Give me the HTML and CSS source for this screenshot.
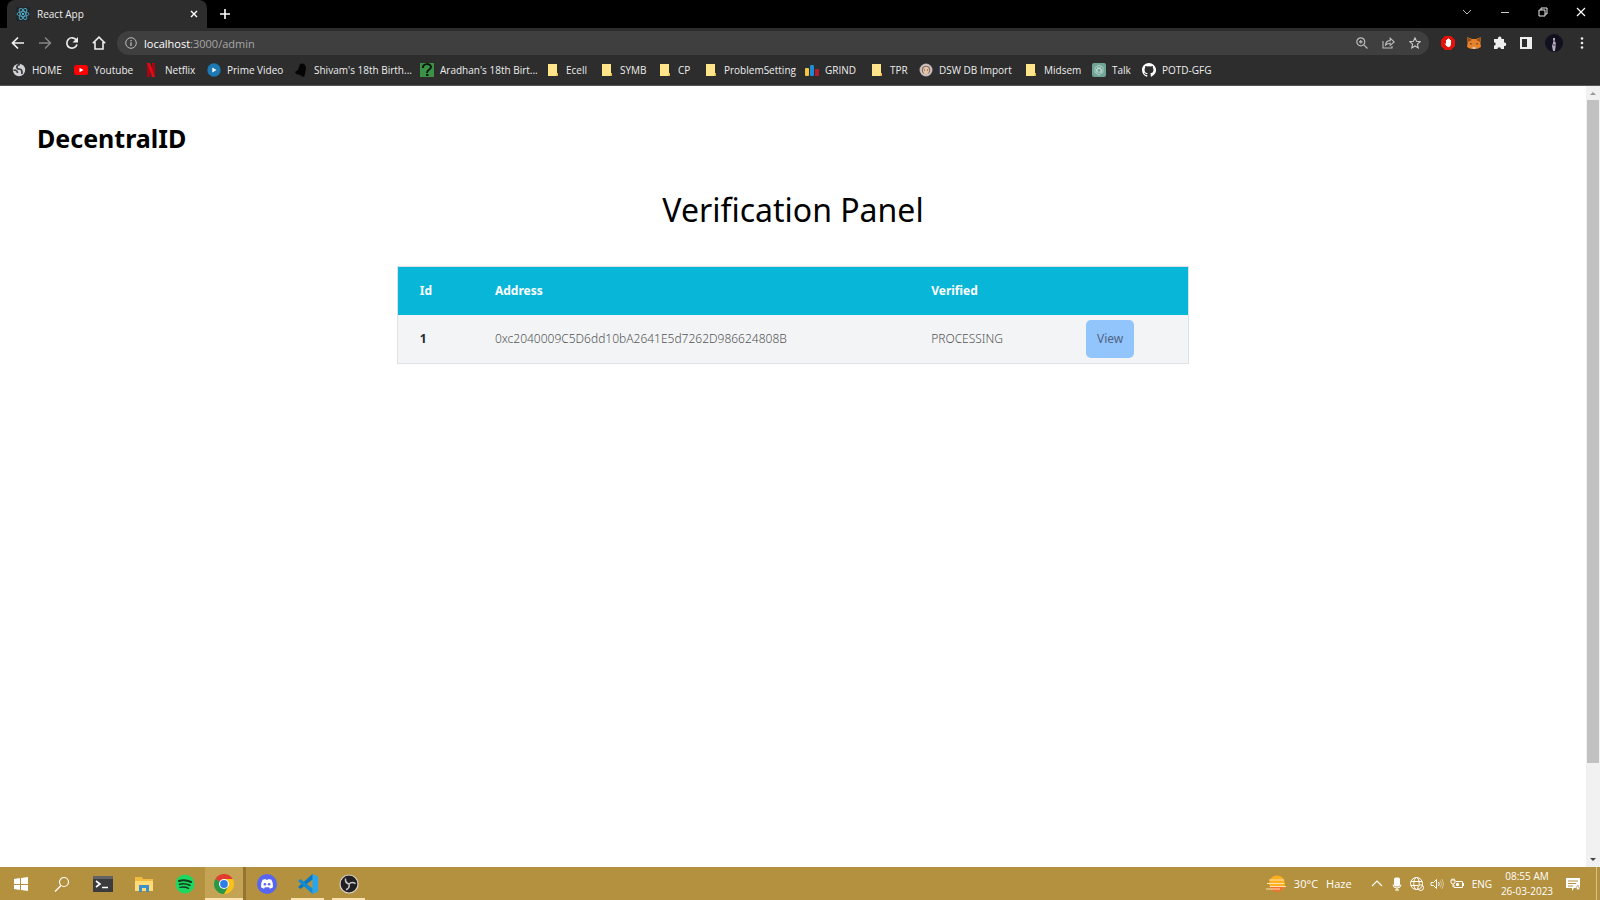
FILE: index.html
```html
<!DOCTYPE html>
<html lang="en">
<head>
<meta charset="utf-8">
<title>React App</title>
<link rel="stylesheet" href="styles.css">
</head>
<body>
<svg class="defs" width="0" height="0" aria-hidden="true">
  <symbol id="folder" viewBox="0 0 14 14"><path d="M2 1h9v10h1v2H2z" fill="#ffe48a"/><path d="M11 10h1v3h-2z" fill="#e9b949"/></symbol>
</svg>
<header class="browser">
  <div class="tabstrip">
    <div class="tab">
      <svg class="i14" viewBox="0 0 14 14" fill="none" stroke="#4f9fb5"><rect width="14" height="14" rx="2" fill="#20262b" stroke="none"/><ellipse cx="7" cy="7" rx="6" ry="2.4"/><ellipse cx="7" cy="7" rx="6" ry="2.4" transform="rotate(60 7 7)"/><ellipse cx="7" cy="7" rx="6" ry="2.4" transform="rotate(120 7 7)"/><circle cx="7" cy="7" r="1" fill="#61dafb" stroke="none"/></svg>
      <span class="tab-title">React App</span>
      <button class="icon-btn" aria-label="Close tab"><svg width="8" height="8" viewBox="0 0 8 8" stroke="#fff" stroke-width="1.4"><path d="M1 1l6 6M7 1L1 7"/></svg></button>
    </div>
    <button class="icon-btn new-tab" aria-label="New tab"><svg width="10" height="10" viewBox="0 0 10 10" stroke="#fff" stroke-width="1.6"><path d="M5 0v10M0 5h10"/></svg></button>
    <div class="window-controls">
      <button class="icon-btn" aria-label="Search tabs"><svg width="10" height="10" viewBox="0 0 10 10" fill="none" stroke="#bbb"><path d="M1 3l4 4 4-4"/></svg></button>
      <button class="icon-btn" aria-label="Minimize"><svg width="10" height="10" viewBox="0 0 10 10" stroke="#ccc"><path d="M1 5.500h8"/></svg></button>
      <button class="icon-btn" aria-label="Restore"><svg width="10" height="10" viewBox="0 0 10 10" fill="none" stroke="#eee"><path d="M1 3h6v6H1zM3 3V1h6v6H7"/></svg></button>
      <button class="icon-btn" aria-label="Close"><svg width="10" height="10" viewBox="0 0 10 10" stroke="#fff" stroke-width="1.200"><path d="M1 1l8 8M9 1L1 9"/></svg></button>
    </div>
  </div>
  <div class="toolbar">
    <nav class="nav-buttons" aria-label="Navigation">
      <button class="icon-btn" aria-label="Back"><svg class="i14" viewBox="0 0 14 14" fill="none" stroke="#f1f1f1" stroke-width="1.700"><path d="M13 7H2M7 1.500L1.500 7 7 12.500"/></svg></button>
      <button class="icon-btn" aria-label="Forward"><svg class="i14" viewBox="0 0 14 14" fill="none" stroke="#858585" stroke-width="1.500"><path d="M1 7h11M7 1.500L12.500 7 7 12.500"/></svg></button>
      <button class="icon-btn" aria-label="Reload"><svg class="i14" viewBox="0 0 14 14"><path d="M11.300 4A5.200 5.200 0 1 0 12 8.500" fill="none" stroke="#eee" stroke-width="1.700"/><path d="M13 1v5.500H7.500z" fill="#eee"/></svg></button>
      <button class="icon-btn" aria-label="Home"><svg class="i14" viewBox="0 0 14 14" fill="none" stroke="#eee" stroke-width="1.600"><path d="M.8 7.200L7 1.200l6.200 6M3 6v7h8V6"/></svg></button>
    </nav>
    <div class="omnibox">
      <svg width="12" height="12" viewBox="0 0 12 12" fill="none" stroke="#bbb"><circle cx="6" cy="6" r="5.300"/><path d="M6 5.200V9M6 3v1.200" stroke-width="1.300"/></svg>
      <a class="url" href="#"><span class="host">localhost</span>:3000/admin</a>
      <div class="omni-actions">
        <button class="icon-btn" aria-label="Zoom"><svg width="12" height="12" viewBox="0 0 12 12" fill="none" stroke="#bbb" stroke-width="1.200"><circle cx="4.800" cy="4.800" r="4"/><path d="M7.800 7.800l3.700 3.700M3 4.800h3.600M4.800 3v3.600"/></svg></button>
        <button class="icon-btn" aria-label="Share"><svg width="13" height="12" viewBox="0 0 13 12" fill="none" stroke="#bbb" stroke-width="1.100"><path d="M1 4v7h9V9M3.500 8c.3-3 2-4.300 4.700-4.400V1.200L12.200 5 8.200 8.300V6.200C6 6.200 4.800 6.700 3.500 8z"/></svg></button>
        <button class="icon-btn" aria-label="Bookmark"><svg width="12" height="12" viewBox="0 0 12 12" fill="none" stroke="#ccc" stroke-width="1.100"><path d="M6 .9l1.500 3.400 3.700.4-2.800 2.500.8 3.700L6 9l-3.200 1.900.8-3.700L.8 4.700l3.700-.4z"/></svg></button>
      </div>
    </div>
    <div class="extensions">
      <button class="icon-btn" aria-label="Ad blocker"><svg class="i14" viewBox="0 0 14 14"><path d="M4 0h6l4 4v6l-4 4H4l-4-4V4z" fill="#e3120b"/><path d="M3.500 7l1.500 1V4h1V3h1v-.5h1V3h1v1h1v4.500Q9.500 11 7.500 11.200 5.500 11 3.500 7z" fill="#fff"/></svg></button>
      <button class="icon-btn" aria-label="Wallet"><svg class="i14" viewBox="0 0 14 14"><path d="M0 1l5 2h4l5-2-.6 6 .6 4-3 1.500L9 13H5l-2-.5L0 11l.6-4z" fill="#e8822b"/><path d="M0 1l5 3-4 2zM14 1L9 4l4 2z" fill="#9a4d16"/><path d="M3 7l2.500 1-2 .6zM11 7L8.500 8l2 .6z" fill="#33312e"/><path d="M5.500 11h3L8 13H6z" fill="#d8cdc4"/></svg></button>
      <button class="icon-btn" aria-label="Extensions"><svg class="i14" viewBox="0 0 14 14"><path d="M1 3h4a1.800 1.800 0 1 1 3.400 0H11v3.500a1.800 1.800 0 1 1 0 3.500v3H8a1.800 1.800 0 0 0-3.600 0H1v-3.400a1.700 1.700 0 0 0 0-3.400z" fill="#eee"/></svg></button>
      <button class="icon-btn" aria-label="Side panel"><svg class="i14" viewBox="0 0 14 14"><path d="M1 1h12v12H1zM3 3v8h5V3z" fill="#eee" fill-rule="evenodd"/></svg></button>
      <button class="icon-btn" aria-label="Profile"><svg width="18" height="18" viewBox="0 0 18 18"><circle cx="9" cy="9" r="9" fill="#11101f"/><path d="M8 4h2v3l1 3-1 7H8L7 12l1-3z" fill="#b7a9bd"/><path d="M8 7h2M8 11h3" stroke="#503e55"/></svg></button>
      <button class="icon-btn" aria-label="Menu"><svg class="i14" viewBox="0 0 14 14" fill="#eee"><circle cx="7" cy="2.500" r="1.300"/><circle cx="7" cy="7" r="1.300"/><circle cx="7" cy="11.500" r="1.300"/></svg></button>
    </div>
  </div>
  <nav class="bookmarks" aria-label="Bookmarks">
    <a href="#"><svg class="i14" viewBox="0 0 14 14"><circle cx="7" cy="7" r="6.200" fill="#cfd1d4"/><path d="M8 1.500C4 2 4 6 7 6s3 2 3 5M1.500 7c2.500 0 4 .5 4 3" fill="none" stroke="#3a3b3e" stroke-width="1.700"/></svg>HOME</a>
    <a href="#"><svg class="i14" viewBox="0 0 14 14"><rect y="2" width="14" height="10" rx="2.500" fill="#f00"/><path d="M5.500 4.800L9.500 7l-4 2.200z" fill="#fff"/></svg>Youtube</a>
    <a href="#"><svg class="i14" viewBox="0 0 14 14"><path d="M2 0h3v14H2zM7 0h3v14H7z" fill="#a30812"/><path d="M2 0h3l5 14H7z" fill="#e50914"/></svg>Netflix</a>
    <a href="#"><svg class="i14" viewBox="0 0 14 14"><circle cx="7" cy="7" r="6.700" fill="#1d79b4"/><path d="M5.300 4.500L9.500 7l-4.200 2.500z" fill="#fff"/></svg>Prime Video</a>
    <a href="#"><svg class="i14" viewBox="0 0 14 14"><path d="M6 1Q11-1 12 5l-1 6-1 3-3-1-1-1-4-1-1-2 3-2z" fill="#050505"/></svg>Shivam's 18th Birth...</a>
    <a href="#"><svg class="i14" viewBox="0 0 14 14"><path d="M0 0h14v14H0z" fill="#3b9145"/><path d="M3 5c-1-5 8-5 8-1 0 3-4 2-4 6M6 12h2.500" fill="none" stroke="#0b180c" stroke-width="2"/></svg>Aradhan's 18th Birt...</a>
    <a href="#"><svg class="i14"><use href="#folder"/></svg>Ecell</a>
    <a href="#"><svg class="i14"><use href="#folder"/></svg>SYMB</a>
    <a href="#"><svg class="i14"><use href="#folder"/></svg>CP</a>
    <a href="#"><svg class="i14"><use href="#folder"/></svg>ProblemSetting</a>
    <a href="#"><svg class="i14" viewBox="0 0 14 14"><rect y="5" width="4" height="8" rx="1" fill="#f4c542"/><rect x="5" y="2" width="4" height="11" rx="1" fill="#1f8dd6"/><rect x="10" y="6" width="4" height="7" rx="1" fill="#b71c2c"/></svg>GRIND</a>
    <a href="#"><svg class="i14"><use href="#folder"/></svg>TPR</a>
    <a href="#"><svg class="i14" viewBox="0 0 14 14"><circle cx="7" cy="7" r="6.500" fill="#b9aeb2"/><circle cx="7" cy="7" r="5" fill="#8c6f60" stroke="#e5dfe0"/><ellipse cx="7" cy="7.500" rx="3" ry="3.700" fill="#e7c3a6"/><path d="M5 7h1M8 7h1" stroke="#554"/></svg>DSW DB Import</a>
    <a href="#"><svg class="i14"><use href="#folder"/></svg>Midsem</a>
    <a href="#"><svg class="i14" viewBox="0 0 14 14" fill="none" stroke="#d8ebe5"><rect width="14" height="14" rx="2" fill="#6fa596" stroke="none"/><path d="M7 2l4 2.300v5L7 12 3 9.500v-5zM5 4l4 2v4M9 4L5 6.500V10M7 5l2.500 1.500v2L7 9.500 4.500 8V6z" stroke-width=".6"/></svg>Talk</a>
    <a href="#"><svg class="i14" viewBox="0 0 16 16"><path fill="#fff" d="M8 0C3.580 0 0 3.580 0 8c0 3.540 2.290 6.530 5.470 7.590.4.070.55-.17.55-.38v-1.490c-2.010.37-2.530-.49-2.690-.94-.09-.23-.48-.94-.82-1.130-.28-.15-.68-.52-.01-.53.63-.01 1.080.58 1.230.82.72 1.210 1.870.87 2.330.66.07-.52.28-.87.51-1.070-1.780-.2-3.640-.89-3.640-3.950 0-.87.310-1.590.82-2.150-.08-.2-.36-1.020.08-2.120 0 0 .67-.21 2.200.82a7.500 7.500 0 0 1 4 0c1.530-1.040 2.200-.82 2.200-.82.44 1.100.16 1.920.08 2.120.51.56.82 1.270.82 2.150 0 3.070-1.870 3.750-3.650 3.950.29.25.54.73.54 1.480v2.200c0 .21.15.46.55.38A8 8 0 0 0 8 0z"/></svg>POTD-GFG</a>
  </nav>
</header>
<div class="viewport">
  <main class="page">
    <div class="brand">DecentralID</div>
    <h1>Verification Panel</h1>
    <table class="panel">
      <colgroup><col class="c-id"><col class="c-address"><col class="c-status"><col></colgroup>
      <thead><tr><th scope="col">Id</th><th scope="col">Address</th><th scope="col">Verified</th><td></td></tr></thead>
      <tbody><tr><th scope="row">1</th><td>0xc2040009C5D6dd10bA2641E5d7262D986624808B</td><td>PROCESSING</td><td><button class="view">View</button></td></tr></tbody>
    </table>
  </main>
  <div class="scrollbar" aria-hidden="true">
    <svg width="14" height="14" viewBox="0 0 14 14"><path d="M4 9l3-3 3 3z" fill="#999"/></svg>
    <div class="track"><div class="thumb"></div></div>
    <svg width="14" height="14" viewBox="0 0 14 14"><path d="M4 5l3 3 3-3z" fill="#444"/></svg>
  </div>
</div>
<footer class="taskbar">
  <button class="app" aria-label="Start"><svg class="i16" viewBox="0 0 16 16" fill="#fff"><path d="M1 3l6-1v6H1zM8 2l7-1v7H8zM1 9h6v5l-6-1zM8 9h7v6l-7-1z"/></svg></button>
  <button class="app" aria-label="Search"><svg class="i16" viewBox="0 0 16 16" fill="none" stroke="#fff" stroke-width="1.200"><circle cx="10" cy="6" r="4.500"/><path d="M7 9.500L1 15.500"/></svg></button>
  <button class="app" aria-label="Terminal"><svg class="i20" viewBox="0 0 20 20"><path d="M0 2h20v16H0z" fill="#3b3b3d"/><path d="M0 2h20v3H0z" fill="#626266"/><path d="M3 7l4 3-4 3M9 13.500h6" fill="none" stroke="#fff" stroke-width="1.600"/></svg></button>
  <button class="app" aria-label="File Explorer"><svg class="i20" viewBox="0 0 20 20"><path d="M1 3h7l1 2h10v12H1z" fill="#f1bb3f"/><path d="M1 7h18v10H1z" fill="#ffdc78"/><path d="M5 18v-7h10v7h-3v-4H8v4z" fill="#3c92ce"/></svg></button>
  <button class="app" aria-label="Spotify"><svg class="i20" viewBox="0 0 20 20" fill="none" stroke="#12391d" stroke-linecap="round"><circle cx="10" cy="10" r="9.500" fill="#1ed760" stroke="none"/><path d="M4 7q6-2 12 1" stroke-width="2"/><path d="M4.500 10.300q5-1.500 10.300 1" stroke-width="1.700"/><path d="M5 13.400q4.500-1 8.500 1" stroke-width="1.400"/></svg></button>
  <button class="app open active" aria-label="Chrome"><svg class="i20" viewBox="0 0 20 20"><path d="M10 10L1.340 5A10 10 0 0 1 18.660 5z" fill="#e33b2e"/><path d="M10 10V5h8.660A10 10 0 0 1 10 20z" fill="#fbc116"/><path d="M10 10l4.330 2.500L10 20A10 10 0 0 1 1.340 5z" fill="#279847"/><circle cx="10" cy="10" r="5" fill="#fff"/><circle cx="10" cy="10" r="3.900" fill="#2f7de9"/></svg></button>
  <button class="app" aria-label="Discord"><svg class="i20" viewBox="0 0 20 20"><circle cx="10" cy="10" r="10" fill="#5865f2"/><path d="M5.500 5.800L8.500 5l.5.800h2l.5-.8 3 .8Q16.500 9.500 16 13.300L13 14.800l-1-1.500H8l-1 1.500-3-1.500Q3.500 9.500 5.500 5.800z" fill="#fff"/><circle cx="7.900" cy="10.200" r="1.300" fill="#5865f2"/><circle cx="12.100" cy="10.200" r="1.300" fill="#5865f2"/></svg></button>
  <button class="app open" aria-label="Visual Studio Code"><svg class="i20" viewBox="0 0 20 20"><path d="M14.500 0L20 2.500v15L14.500 20z" fill="#27a5ee"/><path d="M14.500 0v5.500L2.500 15 0 13z" fill="#0879c5"/><path d="M14.500 20v-5.500L2.500 5 0 7z" fill="#138bd3"/></svg></button>
  <button class="app open" aria-label="OBS Studio"><svg class="i20" viewBox="0 0 20 20"><circle cx="10" cy="10" r="9" fill="#211f21" stroke="#d8d4d0" stroke-width="1.200"/><g fill="none" stroke="#c9c7c7" stroke-width="1.500"><path d="M10 10q-4-1-3.500-5.500"/><path d="M10 10q-4-1-3.500-5.500" transform="rotate(120 10 10)"/><path d="M10 10q-4-1-3.500-5.500" transform="rotate(240 10 10)"/></g></svg></button>
  <div class="tray">
    <div class="weather"><svg class="i20" viewBox="0 0 20 20"><circle cx="11" cy="9.500" r="8" fill="#fdb01e"/><path d="M4 13h14q-3 5-7 5t-7-5z" fill="#ef7134"/><path d="M3 6h15M1 9.500h17M4 12.500h16M0 15h14" stroke="#ffe0ae" stroke-width="1.200"/></svg><span>30°C</span><span>Haze</span></div>
    <div class="status">
      <svg width="14" height="14" viewBox="0 0 14 14" fill="none" stroke="#fff" stroke-width="1.200"><path d="M2 9l5-5 5 5"/></svg>
      <svg width="14" height="14" viewBox="0 0 14 14" fill="none" stroke="#fff"><rect x="4.500" y="1" width="5" height="8" rx="1" fill="#fff"/><path d="M3 7.500q0 3.500 4 3.500t4-3.500M7 11v2.500M5 13h4"/></svg>
      <svg width="14" height="14" viewBox="0 0 14 14" fill="none" stroke="#fff"><circle cx="6.500" cy="6.500" r="6"/><ellipse cx="6.500" cy="6.500" rx="2.700" ry="6"/><path d="M1 4.500h11M1 8.500h7"/><circle cx="10.700" cy="10.700" r="2.800" fill="#b3913e"/><path d="M9 12.500L12.500 9"/></svg>
      <svg width="14" height="14" viewBox="0 0 14 14" fill="none" stroke="#fff"><path d="M1 5.500h2.500l3-3v9l-3-3H1zM8.500 5q1.500 2 0 4"/><path d="M10.300 3.500q2.500 3.500 0 7M12 2q3 5 0 10" stroke="#d6c59b"/></svg>
      <svg width="14" height="14" viewBox="0 0 14 14" fill="none" stroke="#fff"><path d="M6 4.500h6.500v6H4V8M13.500 6v3M1 3h4v2q0 2-2 2T1 5zM2 1.500V3M4 1.500V3M3 7v3"/><path d="M6.500 8.500v-2h2v2z" fill="#fff"/></svg>
      <span class="lang">ENG</span>
    </div>
    <div class="clock"><time>08:55 AM</time><time>26-03-2023</time></div>
    <button class="icon-btn" aria-label="Notifications"><svg class="i14" viewBox="0 0 14 14"><path d="M0 1h14v10H8l-2 3v-3H0z" fill="#fff"/><path d="M2 4h10M2 6.500h8M2 9h5" stroke="#b3913e"/><path d="M12 8q-3 2-1 5 3 0 3-2-2 0-2-3z" fill="#fff" stroke="#b3913e" stroke-width=".7"/></svg></button>
  </div>
</footer>
</body>
</html>
```
FILE: styles.css
```css
* { box-sizing: border-box; }
body {
  margin: 0;
  min-height: 100vh;
  display: flex;
  flex-direction: column;
  background: #fff;
  font-family: "Open Sans", "Noto Sans", sans-serif;
}
button { font: inherit; border: 0; padding: 0; background: none; color: inherit; }
a { color: inherit; text-decoration: none; }
svg { display: block; flex: none; }
.defs { position: absolute; }
.i14 { width: 14px; height: 14px; }
.i16 { width: 16px; height: 16px; }
.i20 { width: 20px; height: 20px; }
.icon-btn { display: grid; place-items: center; }

.browser { background: #2d2d2d; color: #eee; font-size: 10px; border-bottom: 1px solid #555; }
.tabstrip { display: flex; align-items: center; height: 28px; padding-left: 7px; background: #000; }
.tab { display: flex; align-items: center; gap: 7px; width: 200px; height: 28px; padding: 0 9px; border-radius: 8px 8px 0 0; background: #2d2d2d; }
.tab-title { flex: 1; }
.new-tab { margin-left: 13px; }
.window-controls { display: flex; gap: 28px; margin-left: auto; padding: 0 14px 4px 0; }

.toolbar { display: flex; align-items: center; height: 30px; padding: 0 11px; }
.nav-buttons { display: flex; gap: 13px; }
.omnibox { flex: 1; display: flex; align-items: center; gap: 7px; height: 24px; margin-left: 11px; padding: 0 8px; border-radius: 12px; background: #3f3f3f; }
.url { flex: 1; font-size: 11px; color: #a6a6a6; }
.host { color: #fff; }
.omni-actions { display: flex; gap: 14px; }
.extensions { display: flex; align-items: center; gap: 12px; margin-left: 12px; }

.bookmarks {
  display: grid;
  grid-template-columns: 62px 71px 62px 87px 126px 126px 54px 58px 46px 101px 65px 49px 105px 68px 50px 80px;
  align-items: center;
  height: 27px;
  padding: 0 12px 3px;
}
.bookmarks a { display: flex; align-items: center; gap: 6px; white-space: nowrap; }

.viewport { flex: 1; display: flex; }
.page { flex: 1; padding: 34px 37px; font-family: "Noto Sans", sans-serif; }
.brand { font-size: 25px; font-weight: 700; line-height: 36px; color: #000; }
h1 { margin: 32px 0 34px; text-align: center; font-size: 32px; font-weight: 400; line-height: 44px; color: #000; }
.panel { width: 52.4%; margin: 0 auto; border: 1px solid #dee2e6; border-spacing: 0; table-layout: fixed; font-size: 12px; line-height: 20px; text-align: left; background: #f2f4f6; }
.c-id { width: 9.5%; }
.c-address { width: 55.2%; }
.c-status { width: 19.6%; }
.panel th, .panel td { height: 48px; padding: 0 22px; color: #222b33; }
.panel td { font-weight: 300; color: #555; }
.panel thead th, .panel thead td { background: #08b6d8; color: #fff; }
.view { display: block; height: 38px; padding: 0 11px; border-radius: 5px; background: #93c5fd; color: #4d6484; font-weight: 400; }

.scrollbar { display: flex; flex-direction: column; width: 14px; background: #f1f1f1; }
.track { flex: 1; padding: 0 1px; }
.thumb { height: 88%; background: #c1c1c1; }

.taskbar { display: flex; height: 33px; background: #b3913e; color: #fff; font-size: 11px; }
.app { display: grid; place-items: center; width: 41px; }
.app.open { background: linear-gradient(#fce3b0, #fce3b0) center bottom / 33px 2px no-repeat; }
.app.active { background: linear-gradient(#fce3b0, #fce3b0) center bottom / 100% 2px no-repeat, #c4a355; border-right: 3px solid #92762f; }
.tray { display: flex; align-items: center; margin-left: auto; padding-right: 16px; border-right: 1px solid #d6c08b; margin-right: 3px; }
.weather { display: flex; align-items: center; gap: 8px; margin-right: 18px; }
.status { display: flex; align-items: center; gap: 6px; }
.lang { font-size: 10px; margin-left: 2px; }
.clock { display: flex; flex-direction: column; align-items: center; width: 54px; margin: 0 12px 0 8px; font-size: 10px; line-height: 15px; white-space: nowrap; }
```
